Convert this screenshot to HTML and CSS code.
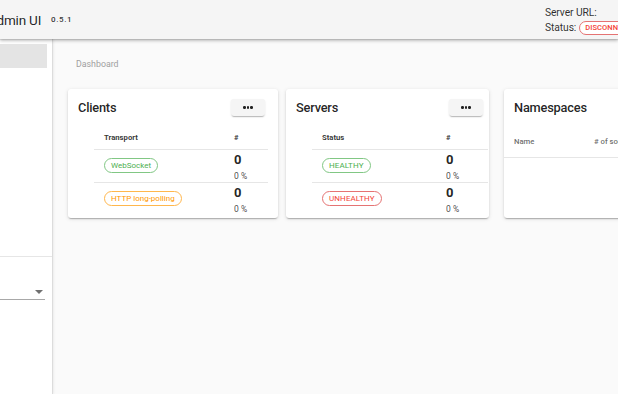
FILE: index.html
```html
<!DOCTYPE html>
<html>
<head>
<meta charset="utf-8">
<link rel="stylesheet" href="styles.css">
</head>
<body>
<div class="app">
  <header class="appbar">
    <div class="brand">
      <span class="title">Socket.IO Admin UI</span>
      <span class="version">0.5.1</span>
    </div>
    <div class="conn">
      <div class="conn-line">Server URL:</div>
      <div class="conn-line">Status: <span class="chip chip-red chip-upper chip-status">Disconnected</span></div>
    </div>
  </header>
  <div class="body">
    <nav class="sidebar">
      <div class="nav-item active"></div>
      <div class="nav-spacer"></div>
      <div class="divider"></div>
      <div class="select">
        <span class="select-arrow"></span>
      </div>
    </nav>
    <main class="main">
      <div class="breadcrumb">Dashboard</div>
      <div class="cards">
        <section class="card card-clients">
          <div class="card-head">
            <h2 class="card-title">Clients</h2>
            <button class="more"><i></i><i></i><i></i></button>
          </div>
          <table class="tbl">
            <thead><tr><th class="c1">Transport</th><th class="c2">#</th></tr></thead>
            <tbody>
              <tr><td class="c1"><span class="chip chip-green">WebSocket</span></td><td class="c2"><div class="num">0</div><div class="pct">0 %</div></td></tr>
              <tr><td class="c1"><span class="chip chip-orange">HTTP long-polling</span></td><td class="c2"><div class="num">0</div><div class="pct">0 %</div></td></tr>
            </tbody>
          </table>
        </section>
        <section class="card card-servers">
          <div class="card-head">
            <h2 class="card-title">Servers</h2>
            <button class="more"><i></i><i></i><i></i></button>
          </div>
          <table class="tbl">
            <thead><tr><th class="c1">Status</th><th class="c2">#</th></tr></thead>
            <tbody>
              <tr><td class="c1"><span class="chip chip-green chip-upper">Healthy</span></td><td class="c2"><div class="num">0</div><div class="pct">0 %</div></td></tr>
              <tr><td class="c1"><span class="chip chip-red chip-upper">Unhealthy</span></td><td class="c2"><div class="num">0</div><div class="pct">0 %</div></td></tr>
            </tbody>
          </table>
        </section>
        <section class="card card-ns">
          <div class="card-head">
            <h2 class="card-title">Namespaces</h2>
          </div>
          <table class="tbl tbl-ns">
            <thead><tr><th class="c1">Name</th><th class="c2"># of sockets</th></tr></thead>
            <tbody></tbody>
          </table>
        </section>
      </div>
    </main>
  </div>
</div>
</body>
</html>
```

FILE: styles.css
```css
html, body {
  margin: 0;
  padding: 0;
  width: 618px;
  height: 394px;
  overflow: hidden;
  font-family: Roboto, "Liberation Sans", Arial, sans-serif;
  color: rgba(0, 0, 0, 0.87);
}

.app {
  display: flex;
  flex-direction: column;
  height: 394px;
  background: #fafafa;
}

.appbar {
  height: 39px;
  flex: none;
  background: #f5f5f5;
  box-shadow: 0 2px 3px rgba(0, 0, 0, 0.22), 0 1px 1px rgba(0, 0, 0, 0.1);
  display: flex;
  justify-content: space-between;
  align-items: center;
  position: relative;
  z-index: 2;
}

.brand {
  display: flex;
  align-items: center;
  margin-left: -71px;
  white-space: nowrap;
}

.title {
  font-size: 13.5px;
  letter-spacing: -0.2px;
  font-weight: 400;
  color: rgba(0, 0, 0, 0.87);
  padding-top: 1px;
}

.version {
  font-size: 8px;
  font-weight: 500;
  margin-left: 10px;
  letter-spacing: 0.6px;
  color: rgba(0, 0, 0, 0.8);
}

.conn {
  display: flex;
  flex-direction: column;
  width: 73px;
  white-space: nowrap;
  font-size: 10.3px;
  letter-spacing: -0.1px;
  color: rgba(0, 0, 0, 0.82);
  padding-top: 1px;
}

.conn-line {
  display: flex;
  align-items: center;
  height: 15px;
  gap: 3px;
}

.chip {
  display: inline-flex;
  vertical-align: top;
  align-items: center;
  height: 13px;
  border: 1px solid;
  border-radius: 8px;
  padding: 0 6px;
  font-size: 8px;
  font-weight: 400;
  white-space: nowrap;
  background: #fff;
  letter-spacing: 0;
}

.chip-upper {
  text-transform: uppercase;
  letter-spacing: 0.1px;
}

.chip-status {
  font-weight: 500;
  font-size: 7.5px;
  height: 12px;
  padding: 0 5px;
}

.chip-green { color: #4caf50; border-color: #81c784; }
.chip-orange { color: #ff9800; border-color: #ffb74d; }
.chip-red { color: #f44336; border-color: #e57373; }

.body {
  flex: 1;
  display: flex;
  min-height: 0;
}

.sidebar {
  width: 52px;
  flex: none;
  background: #fff;
  border-right: 1px solid #dcdcdc;
  box-shadow: 1px 0 2px rgba(0, 0, 0, 0.06);
  display: flex;
  flex-direction: column;
  padding-top: 5px;
}

.nav-item {
  height: 24px;
  margin-right: 5px;
}

.nav-item.active {
  background: #e4e4e4;
}

.nav-spacer {
  height: 188px;
}

.divider {
  height: 1px;
  background: #e6e6e6;
}

.select {
  margin-top: 28px;
  margin-right: 7px;
  height: 14px;
  border-bottom: 1px solid #a8a8a8;
  display: flex;
  justify-content: flex-end;
  align-items: center;
}

.select-arrow {
  width: 0;
  height: 0;
  border-left: 4px solid transparent;
  border-right: 4px solid transparent;
  border-top: 4px solid #707070;
  margin-right: 2px;
}

.main {
  flex: 1;
  padding: 19px 0 0 15px;
  min-width: 0;
}

.breadcrumb {
  font-size: 8.8px;
  color: #a0a0a0;
  height: 12px;
  line-height: 12px;
  padding-left: 8px;
}

.cards {
  display: flex;
  align-items: flex-start;
  margin-top: 19px;
}

.card {
  background: #fff;
  border-radius: 3px;
  box-shadow: 0 2px 1px -1px rgba(0, 0, 0, 0.18), 0 1px 2px 0 rgba(0, 0, 0, 0.12), 0 1px 4px 0 rgba(0, 0, 0, 0.1);
  height: 129px;
  flex: none;
  box-sizing: border-box;
}

.card-clients { width: 210px; }
.card-servers { width: 203px; margin-left: 8px; }
.card-ns { width: 140px; margin-left: 15px; border-radius: 3px 0 0 3px; }

.card-head {
  height: 36px;
  box-sizing: border-box;
  display: flex;
  align-items: flex-start;
  justify-content: space-between;
  padding: 10px 13px 0 10px;
}

.card-servers .card-head { padding-right: 6px; }

.card-title {
  margin: 0;
  font-size: 12.8px;
  line-height: 18px;
  font-weight: 500;
  letter-spacing: -0.2px;
  color: rgba(0, 0, 0, 0.87);
}

.more {
  width: 34px;
  height: 17px;
  margin-top: 0;
  border: none;
  border-radius: 3px;
  background: #f5f5f5;
  box-shadow: 0 2px 1px -1px rgba(0, 0, 0, 0.2), 0 1px 2px rgba(0, 0, 0, 0.12);
  padding: 0;
  display: flex;
  align-items: center;
  justify-content: center;
  gap: 1.2px;
}

.more i {
  display: block;
  width: 2.4px;
  height: 2.4px;
  border-radius: 50%;
  background: #222;
}

.tbl {
  border-collapse: collapse;
  margin-left: 26px;
  width: 174px;
}

.card-servers .tbl {
  width: 176px;
}

.tbl th {
  height: 24px;
  padding: 0 10px;
  text-align: left;
  font-size: 7.7px;
  font-weight: 700;
  color: rgba(0, 0, 0, 0.8);
  border-bottom: 1px solid #e6e6e6;
  vertical-align: middle;
}

.tbl td {
  height: 32px;
  box-sizing: border-box;
  padding: 0 10px;
  vertical-align: top;
  border-bottom: 1px solid #e6e6e6;
  line-height: 15px;
  font-size: 8px;
}

.tbl td.c1 {
  padding-top: 8px;
}

.tbl td.c2 {
  padding-top: 2px;
}

.tbl tbody tr:last-child td {
  border-bottom: none;
}

.card-clients .c1 { width: 110px; }
.card-servers .c1 { width: 104px; }

.num {
  font-size: 13px;
  font-weight: 700;
  line-height: 15px;
  color: rgba(0, 0, 0, 0.87);
}

.pct {
  font-size: 8.5px;
  line-height: 11px;
  margin-top: 4px;
  color: rgba(0, 0, 0, 0.75);
}

.tbl-ns {
  margin-left: 0;
  width: 180px;
}

.tbl-ns th {
  height: 32px;
  font-weight: 500;
  color: rgba(0, 0, 0, 0.6);
  white-space: nowrap;
}

.tbl-ns .c1 { width: 60px; }
```
